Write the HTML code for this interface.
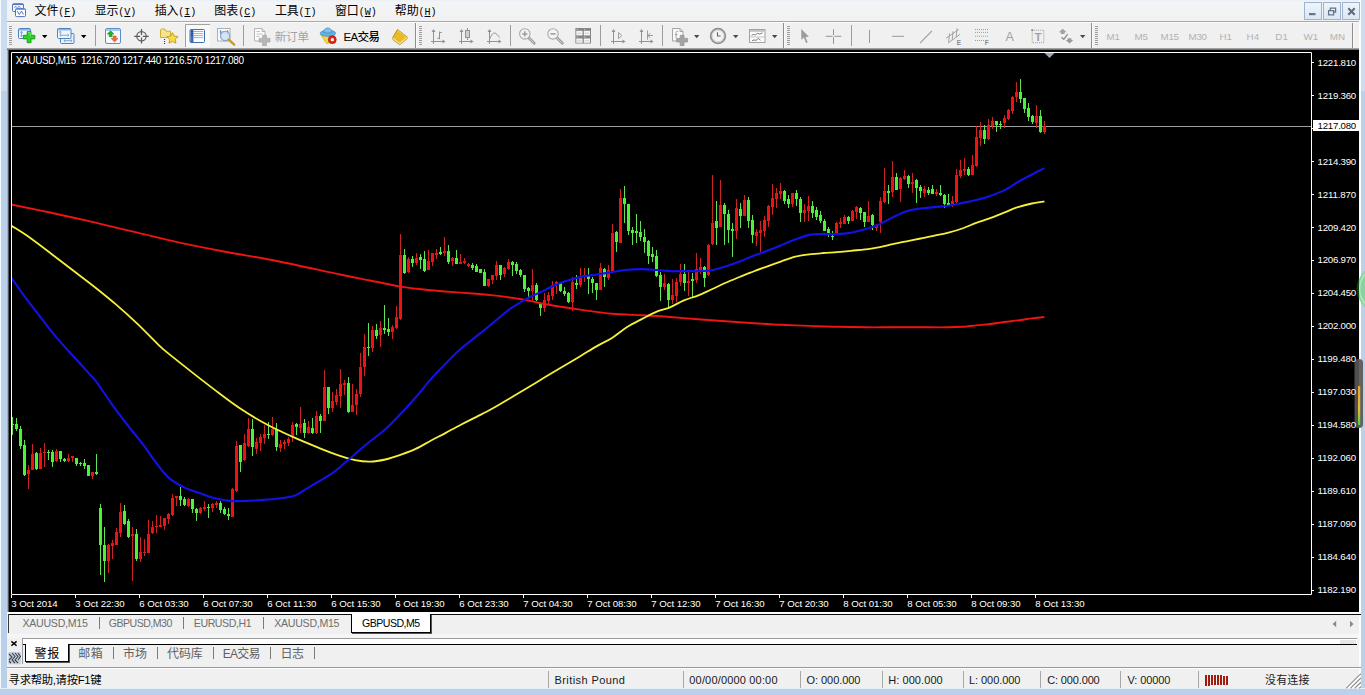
<!DOCTYPE html><html lang="zh-CN"><head><meta charset="utf-8"><title>MetaTrader 4 - XAUUSD,M15</title><style>
html,body{margin:0;padding:0}
body{width:1365px;height:695px;position:relative;overflow:hidden;background:#f0f0f0;font-family:'Liberation Sans', 'Noto Sans CJK SC', sans-serif;}
.a{position:absolute}
.t{position:absolute;white-space:nowrap;line-height:16px;height:16px}
.mn{font-family:'Liberation Mono', 'Noto Sans CJK SC', monospace;font-size:10px;letter-spacing:0}
svg{position:absolute;left:0;top:0}
</style></head><body>

<div class="a" style="left:0;top:0;width:1365px;height:22px;background:linear-gradient(#e9eff7 0,#f3f4f6 2px,#f1f1f1 100%)"></div>
<div class="a" style="left:0;top:0;width:7px;height:695px;background:#bad0ea"></div>
<div class="a" style="left:0;top:0;width:7px;height:91px;background:#cbdcf1"></div>
<div class="a" style="left:0;top:0;width:1px;height:695px;background:#f4fbff"></div>
<div class="a" style="left:7px;top:50px;width:1px;height:562px;background:#a4afbe"></div>
<div class="a" style="left:8px;top:50px;width:1px;height:562px;background:#55575c"></div>
<div class="a" style="left:1359px;top:0;width:2px;height:695px;background:#fbfeff"></div>
<div class="a" style="left:1361px;top:0;width:4px;height:695px;background:#b9d1ea"></div>
<div class="a" style="left:1361px;top:0;width:4px;height:91px;background:#cbdcf1"></div>
<div class="a" style="left:7px;top:21px;width:1352px;height:1px;background:#a9a9a9"></div>
<div class="a" style="left:7px;top:22px;width:1352px;height:1px;background:#fbfbfb"></div>
<div class="a" style="left:7px;top:23px;width:1352px;height:26px;background:#f0f0f0"></div>
<div class="a" style="left:7px;top:48px;width:1352px;height:2px;background:linear-gradient(#b8b8b8,#5a5a5a)"></div>
<div class="a" style="left:9px;top:50px;width:1350px;height:562px;background:#000"></div>
<div class="a" style="left:7px;top:612px;width:1352px;height:2px;background:#fdfdfd"></div>
<div class="a" style="left:7px;top:614px;width:1352px;height:20px;background:#f0f0f0"></div>
<div class="a" style="left:8px;top:614px;width:343px;height:1px;background:#0c0c0c"></div>
<div class="a" style="left:8px;top:614px;width:1px;height:19px;background:#3a3a3a"></div>
<div class="a" style="left:431px;top:614px;width:930px;height:1px;background:#0c0c0c"></div>
<div class="a" style="left:7px;top:634px;width:1352px;height:2px;background:#f6f6f6"></div>
<div class="a" style="left:7px;top:636px;width:1352px;height:31px;background:#f0f0f0"></div><div class="a" style="left:7px;top:636px;width:1352px;height:2px;background:#f5f5f5"></div>
<div class="a" style="left:22px;top:638px;width:1335px;height:6px;background:#fff;border-top:1px solid #9c9c9c;border-left:1px solid #9c9c9c;box-sizing:border-box"></div>
<div class="a" style="left:1340px;top:640px;width:16px;height:4px;background:#e6e6e6"></div>
<div class="a" style="left:68px;top:644px;width:1289px;height:1px;background:#000"></div><div class="a" style="left:23px;top:644px;width:3px;height:1px;background:#000"></div><div class="a" style="left:22px;top:639px;width:1px;height:25px;background:#9c9c9c"></div>
<div class="a" style="left:7px;top:667px;width:1354px;height:1px;background:#9a9a9a"></div>
<div class="a" style="left:7px;top:668px;width:1354px;height:1px;background:#fdfdfd"></div>
<div class="a" style="left:7px;top:669px;width:1352px;height:20px;background:#f0f0f0"></div><div class="a" style="left:0;top:688px;width:1365px;height:1px;background:#e6eef8"></div>




<div class="a" style="left:351px;top:614px;width:80px;height:19px;background:#fff;border:1px solid #000;border-top:none;box-sizing:border-box;box-shadow:1px 1px 0 #555"></div>
<div class="a" style="left:25px;top:644px;width:44px;height:18px;background:#fff;border:1px solid #000;border-top:none;box-sizing:border-box;box-shadow:1px 1px 0 #555"></div>

<div class="a" style="left:99px;top:617px;width:1px;height:12px;background:#7a7a7a"></div><div class="a" style="left:183px;top:617px;width:1px;height:12px;background:#7a7a7a"></div><div class="a" style="left:263px;top:617px;width:1px;height:12px;background:#7a7a7a"></div><div class="a" style="left:113px;top:647px;width:1px;height:12px;background:#7a7a7a"></div><div class="a" style="left:157px;top:647px;width:1px;height:12px;background:#7a7a7a"></div><div class="a" style="left:213px;top:647px;width:1px;height:12px;background:#7a7a7a"></div><div class="a" style="left:270px;top:647px;width:1px;height:12px;background:#7a7a7a"></div><div class="a" style="left:314px;top:647px;width:1px;height:12px;background:#7a7a7a"></div><div class="a" style="left:548px;top:671px;width:1px;height:17px;background:#a8a8a8"></div><div class="a" style="left:683px;top:671px;width:1px;height:17px;background:#a8a8a8"></div><div class="a" style="left:800px;top:671px;width:1px;height:17px;background:#a8a8a8"></div><div class="a" style="left:882px;top:671px;width:1px;height:17px;background:#a8a8a8"></div><div class="a" style="left:963px;top:671px;width:1px;height:17px;background:#a8a8a8"></div><div class="a" style="left:1040px;top:671px;width:1px;height:17px;background:#a8a8a8"></div><div class="a" style="left:1120px;top:671px;width:1px;height:17px;background:#a8a8a8"></div><div class="a" style="left:1198px;top:671px;width:1px;height:17px;background:#a8a8a8"></div>

<div class="a" style="left:1304px;top:2px;width:18px;height:18px;box-sizing:border-box;border:1px solid #9fb4cc;background:linear-gradient(#eef4fb,#dbe7f4)"></div>
<div class="a" style="left:1323px;top:2px;width:18px;height:18px;box-sizing:border-box;border:1px solid #9fb4cc;background:linear-gradient(#eef4fb,#dbe7f4)"></div>
<div class="a" style="left:1342px;top:2px;width:18px;height:18px;box-sizing:border-box;border:1px solid #9fb4cc;background:linear-gradient(#eef4fb,#dbe7f4)"></div>

<svg width="1365" height="695" viewBox="0 0 1365 695" shape-rendering="auto">
<rect x="11" y="126" width="1301" height="1" fill="#a0a0a0"/>
<defs><clipPath id="cc"><rect x="12" y="53" width="1299" height="541"/></clipPath></defs>
<g clip-path="url(#cc)">
<rect x="12" y="417" width="1" height="18" fill="#62e058"/><rect x="11" y="424" width="3" height="1" fill="#4af432"/>
<rect x="16" y="418" width="1" height="13" fill="#62e058"/><rect x="15" y="424" width="3" height="5" fill="#4af432"/>
<rect x="20" y="426" width="1" height="23" fill="#62e058"/><rect x="19" y="429" width="3" height="17" fill="#4af432"/>
<rect x="24" y="440" width="1" height="36" fill="#62e058"/><rect x="23" y="445" width="3" height="30" fill="#4af432"/>
<rect x="28" y="465" width="1" height="24" fill="#cc2424"/><rect x="27" y="470" width="3" height="4" fill="#ee1212"/>
<rect x="32" y="444" width="1" height="26" fill="#cc2424"/><rect x="31" y="454" width="3" height="16" fill="#ee1212"/>
<rect x="36" y="452" width="1" height="18" fill="#62e058"/><rect x="35" y="453" width="3" height="16" fill="#4af432"/>
<rect x="40" y="448" width="1" height="21" fill="#cc2424"/><rect x="39" y="453" width="3" height="16" fill="#ee1212"/>
<rect x="44" y="443" width="1" height="24" fill="#cc2424"/><rect x="43" y="452" width="3" height="1" fill="#ee1212"/>
<rect x="48" y="450" width="1" height="10" fill="#62e058"/><rect x="47" y="452" width="3" height="1" fill="#4af432"/>
<rect x="52" y="450" width="1" height="17" fill="#62e058"/><rect x="51" y="452" width="3" height="10" fill="#4af432"/>
<rect x="56" y="449" width="1" height="13" fill="#cc2424"/><rect x="55" y="451" width="3" height="10" fill="#ee1212"/>
<rect x="60" y="451" width="1" height="11" fill="#62e058"/><rect x="59" y="451" width="3" height="8" fill="#4af432"/>
<rect x="64" y="458" width="1" height="4" fill="#62e058"/><rect x="63" y="459" width="3" height="2" fill="#4af432"/>
<rect x="68" y="454" width="1" height="8" fill="#cc2424"/><rect x="67" y="458" width="3" height="3" fill="#ee1212"/>
<rect x="72" y="456" width="1" height="6" fill="#cc2424"/><rect x="71" y="456" width="3" height="2" fill="#ee1212"/>
<rect x="76" y="458" width="1" height="8" fill="#62e058"/><rect x="75" y="458" width="3" height="6" fill="#4af432"/>
<rect x="80" y="462" width="1" height="4" fill="#62e058"/><rect x="79" y="463" width="3" height="1" fill="#4af432"/>
<rect x="84" y="459" width="1" height="10" fill="#62e058"/><rect x="83" y="463" width="3" height="3" fill="#4af432"/>
<rect x="88" y="465" width="1" height="11" fill="#62e058"/><rect x="87" y="465" width="3" height="11" fill="#4af432"/>
<rect x="92" y="472" width="1" height="7" fill="#cc2424"/><rect x="91" y="472" width="3" height="4" fill="#ee1212"/>
<rect x="96" y="454" width="1" height="21" fill="#62e058"/><rect x="95" y="472" width="3" height="2" fill="#4af432"/>
<rect x="100" y="504" width="1" height="71" fill="#62e058"/><rect x="99" y="508" width="3" height="37" fill="#4af432"/>
<rect x="104" y="527" width="1" height="55" fill="#62e058"/><rect x="103" y="545" width="3" height="16" fill="#4af432"/>
<rect x="108" y="544" width="1" height="29" fill="#cc2424"/><rect x="107" y="545" width="3" height="16" fill="#ee1212"/>
<rect x="112" y="540" width="1" height="19" fill="#cc2424"/><rect x="111" y="543" width="3" height="3" fill="#ee1212"/>
<rect x="116" y="528" width="1" height="17" fill="#cc2424"/><rect x="115" y="532" width="3" height="13" fill="#ee1212"/>
<rect x="120" y="503" width="1" height="34" fill="#cc2424"/><rect x="119" y="512" width="3" height="21" fill="#ee1212"/>
<rect x="124" y="505" width="1" height="20" fill="#62e058"/><rect x="123" y="511" width="3" height="13" fill="#4af432"/>
<rect x="128" y="519" width="1" height="19" fill="#62e058"/><rect x="127" y="521" width="3" height="16" fill="#4af432"/>
<rect x="132" y="527" width="1" height="54" fill="#cc2424"/><rect x="131" y="534" width="3" height="2" fill="#ee1212"/>
<rect x="136" y="529" width="1" height="32" fill="#62e058"/><rect x="135" y="534" width="3" height="25" fill="#4af432"/>
<rect x="140" y="537" width="1" height="25" fill="#cc2424"/><rect x="139" y="552" width="3" height="7" fill="#ee1212"/>
<rect x="144" y="539" width="1" height="17" fill="#cc2424"/><rect x="143" y="552" width="3" height="1" fill="#ee1212"/>
<rect x="148" y="520" width="1" height="33" fill="#cc2424"/><rect x="147" y="534" width="3" height="19" fill="#ee1212"/>
<rect x="152" y="521" width="1" height="13" fill="#cc2424"/><rect x="151" y="527" width="3" height="6" fill="#ee1212"/>
<rect x="156" y="515" width="1" height="18" fill="#cc2424"/><rect x="155" y="526" width="3" height="1" fill="#ee1212"/>
<rect x="160" y="516" width="1" height="11" fill="#cc2424"/><rect x="159" y="525" width="3" height="2" fill="#ee1212"/>
<rect x="164" y="518" width="1" height="12" fill="#cc2424"/><rect x="163" y="518" width="3" height="8" fill="#ee1212"/>
<rect x="168" y="513" width="1" height="11" fill="#cc2424"/><rect x="167" y="514" width="3" height="5" fill="#ee1212"/>
<rect x="172" y="494" width="1" height="22" fill="#cc2424"/><rect x="171" y="498" width="3" height="17" fill="#ee1212"/>
<rect x="176" y="496" width="1" height="10" fill="#cc2424"/><rect x="175" y="496" width="3" height="2" fill="#ee1212"/>
<rect x="180" y="487" width="1" height="19" fill="#62e058"/><rect x="179" y="496" width="3" height="4" fill="#4af432"/>
<rect x="184" y="497" width="1" height="9" fill="#62e058"/><rect x="183" y="499" width="3" height="6" fill="#4af432"/>
<rect x="188" y="498" width="1" height="9" fill="#cc2424"/><rect x="187" y="499" width="3" height="7" fill="#ee1212"/>
<rect x="192" y="499" width="1" height="14" fill="#62e058"/><rect x="191" y="499" width="3" height="10" fill="#4af432"/>
<rect x="196" y="508" width="1" height="13" fill="#62e058"/><rect x="195" y="509" width="3" height="4" fill="#4af432"/>
<rect x="200" y="507" width="1" height="7" fill="#cc2424"/><rect x="199" y="508" width="3" height="5" fill="#ee1212"/>
<rect x="204" y="501" width="1" height="10" fill="#cc2424"/><rect x="203" y="507" width="3" height="2" fill="#ee1212"/>
<rect x="208" y="504" width="1" height="14" fill="#62e058"/><rect x="207" y="507" width="3" height="1" fill="#4af432"/>
<rect x="212" y="503" width="1" height="9" fill="#cc2424"/><rect x="211" y="504" width="3" height="4" fill="#ee1212"/>
<rect x="216" y="501" width="1" height="7" fill="#cc2424"/><rect x="215" y="503" width="3" height="2" fill="#ee1212"/>
<rect x="220" y="501" width="1" height="12" fill="#62e058"/><rect x="219" y="503" width="3" height="7" fill="#4af432"/>
<rect x="224" y="507" width="1" height="8" fill="#62e058"/><rect x="223" y="509" width="3" height="5" fill="#4af432"/>
<rect x="228" y="508" width="1" height="12" fill="#62e058"/><rect x="227" y="514" width="3" height="2" fill="#4af432"/>
<rect x="232" y="488" width="1" height="29" fill="#cc2424"/><rect x="231" y="489" width="3" height="28" fill="#ee1212"/>
<rect x="236" y="441" width="1" height="51" fill="#cc2424"/><rect x="235" y="446" width="3" height="45" fill="#ee1212"/>
<rect x="240" y="445" width="1" height="27" fill="#62e058"/><rect x="239" y="445" width="3" height="17" fill="#4af432"/>
<rect x="244" y="434" width="1" height="27" fill="#cc2424"/><rect x="243" y="443" width="3" height="17" fill="#ee1212"/>
<rect x="248" y="418" width="1" height="29" fill="#cc2424"/><rect x="247" y="429" width="3" height="17" fill="#ee1212"/>
<rect x="252" y="419" width="1" height="37" fill="#62e058"/><rect x="251" y="429" width="3" height="18" fill="#4af432"/>
<rect x="256" y="438" width="1" height="16" fill="#cc2424"/><rect x="255" y="442" width="3" height="7" fill="#ee1212"/>
<rect x="260" y="434" width="1" height="17" fill="#cc2424"/><rect x="259" y="437" width="3" height="6" fill="#ee1212"/>
<rect x="264" y="425" width="1" height="19" fill="#cc2424"/><rect x="263" y="434" width="3" height="4" fill="#ee1212"/>
<rect x="268" y="422" width="1" height="17" fill="#62e058"/><rect x="267" y="434" width="3" height="1" fill="#4af432"/>
<rect x="272" y="417" width="1" height="19" fill="#cc2424"/><rect x="271" y="429" width="3" height="6" fill="#ee1212"/>
<rect x="276" y="423" width="1" height="28" fill="#62e058"/><rect x="275" y="429" width="3" height="18" fill="#4af432"/>
<rect x="280" y="440" width="1" height="12" fill="#cc2424"/><rect x="279" y="444" width="3" height="4" fill="#ee1212"/>
<rect x="284" y="440" width="1" height="9" fill="#cc2424"/><rect x="283" y="442" width="3" height="2" fill="#ee1212"/>
<rect x="288" y="437" width="1" height="9" fill="#cc2424"/><rect x="287" y="439" width="3" height="4" fill="#ee1212"/>
<rect x="292" y="422" width="1" height="20" fill="#cc2424"/><rect x="291" y="425" width="3" height="11" fill="#ee1212"/>
<rect x="296" y="423" width="1" height="12" fill="#62e058"/><rect x="295" y="424" width="3" height="3" fill="#4af432"/>
<rect x="300" y="407" width="1" height="26" fill="#cc2424"/><rect x="299" y="424" width="3" height="4" fill="#ee1212"/>
<rect x="304" y="419" width="1" height="19" fill="#62e058"/><rect x="303" y="423" width="3" height="10" fill="#4af432"/>
<rect x="308" y="421" width="1" height="13" fill="#cc2424"/><rect x="307" y="427" width="3" height="6" fill="#ee1212"/>
<rect x="312" y="418" width="1" height="16" fill="#62e058"/><rect x="311" y="428" width="3" height="5" fill="#4af432"/>
<rect x="316" y="411" width="1" height="23" fill="#cc2424"/><rect x="315" y="416" width="3" height="17" fill="#ee1212"/>
<rect x="320" y="414" width="1" height="19" fill="#62e058"/><rect x="319" y="416" width="3" height="5" fill="#4af432"/>
<rect x="324" y="370" width="1" height="51" fill="#cc2424"/><rect x="323" y="387" width="3" height="34" fill="#ee1212"/>
<rect x="328" y="387" width="1" height="27" fill="#62e058"/><rect x="327" y="387" width="3" height="21" fill="#4af432"/>
<rect x="332" y="392" width="1" height="20" fill="#cc2424"/><rect x="331" y="401" width="3" height="7" fill="#ee1212"/>
<rect x="336" y="389" width="1" height="16" fill="#cc2424"/><rect x="335" y="395" width="3" height="7" fill="#ee1212"/>
<rect x="340" y="369" width="1" height="39" fill="#cc2424"/><rect x="339" y="384" width="3" height="12" fill="#ee1212"/>
<rect x="344" y="380" width="1" height="15" fill="#cc2424"/><rect x="343" y="383" width="3" height="2" fill="#ee1212"/>
<rect x="348" y="377" width="1" height="36" fill="#62e058"/><rect x="347" y="383" width="3" height="29" fill="#4af432"/>
<rect x="352" y="384" width="1" height="28" fill="#cc2424"/><rect x="351" y="405" width="3" height="7" fill="#ee1212"/>
<rect x="356" y="389" width="1" height="26" fill="#cc2424"/><rect x="355" y="394" width="3" height="11" fill="#ee1212"/>
<rect x="360" y="353" width="1" height="44" fill="#cc2424"/><rect x="359" y="367" width="3" height="27" fill="#ee1212"/>
<rect x="364" y="334" width="1" height="42" fill="#cc2424"/><rect x="363" y="347" width="3" height="20" fill="#ee1212"/>
<rect x="368" y="323" width="1" height="33" fill="#62e058"/><rect x="367" y="347" width="3" height="1" fill="#4af432"/>
<rect x="372" y="326" width="1" height="26" fill="#cc2424"/><rect x="371" y="330" width="3" height="18" fill="#ee1212"/>
<rect x="376" y="324" width="1" height="15" fill="#62e058"/><rect x="375" y="330" width="3" height="6" fill="#4af432"/>
<rect x="380" y="321" width="1" height="26" fill="#cc2424"/><rect x="379" y="328" width="3" height="7" fill="#ee1212"/>
<rect x="384" y="305" width="1" height="29" fill="#62e058"/><rect x="383" y="328" width="3" height="2" fill="#4af432"/>
<rect x="388" y="318" width="1" height="18" fill="#62e058"/><rect x="387" y="329" width="3" height="3" fill="#4af432"/>
<rect x="392" y="325" width="1" height="14" fill="#cc2424"/><rect x="391" y="327" width="3" height="5" fill="#ee1212"/>
<rect x="396" y="306" width="1" height="23" fill="#cc2424"/><rect x="395" y="317" width="3" height="11" fill="#ee1212"/>
<rect x="400" y="234" width="1" height="86" fill="#cc2424"/><rect x="399" y="255" width="3" height="64" fill="#ee1212"/>
<rect x="404" y="249" width="1" height="25" fill="#62e058"/><rect x="403" y="255" width="3" height="18" fill="#4af432"/>
<rect x="408" y="257" width="1" height="16" fill="#cc2424"/><rect x="407" y="259" width="3" height="13" fill="#ee1212"/>
<rect x="412" y="256" width="1" height="11" fill="#62e058"/><rect x="411" y="259" width="3" height="4" fill="#4af432"/>
<rect x="416" y="253" width="1" height="12" fill="#cc2424"/><rect x="415" y="258" width="3" height="5" fill="#ee1212"/>
<rect x="420" y="254" width="1" height="15" fill="#62e058"/><rect x="419" y="257" width="3" height="3" fill="#4af432"/>
<rect x="424" y="251" width="1" height="21" fill="#62e058"/><rect x="423" y="259" width="3" height="12" fill="#4af432"/>
<rect x="428" y="250" width="1" height="20" fill="#cc2424"/><rect x="427" y="261" width="3" height="9" fill="#ee1212"/>
<rect x="432" y="253" width="1" height="13" fill="#cc2424"/><rect x="431" y="253" width="3" height="9" fill="#ee1212"/>
<rect x="436" y="249" width="1" height="10" fill="#cc2424"/><rect x="435" y="253" width="3" height="2" fill="#ee1212"/>
<rect x="440" y="247" width="1" height="8" fill="#62e058"/><rect x="439" y="252" width="3" height="2" fill="#4af432"/>
<rect x="444" y="237" width="1" height="19" fill="#cc2424"/><rect x="443" y="251" width="3" height="2" fill="#ee1212"/>
<rect x="448" y="245" width="1" height="19" fill="#62e058"/><rect x="447" y="251" width="3" height="11" fill="#4af432"/>
<rect x="452" y="257" width="1" height="9" fill="#cc2424"/><rect x="451" y="258" width="3" height="3" fill="#ee1212"/>
<rect x="456" y="250" width="1" height="14" fill="#62e058"/><rect x="455" y="258" width="3" height="6" fill="#4af432"/>
<rect x="460" y="254" width="1" height="10" fill="#cc2424"/><rect x="459" y="262" width="3" height="2" fill="#ee1212"/>
<rect x="464" y="258" width="1" height="6" fill="#cc2424"/><rect x="463" y="261" width="3" height="2" fill="#ee1212"/>
<rect x="468" y="263" width="1" height="4" fill="#cc2424"/><rect x="467" y="264" width="3" height="2" fill="#ee1212"/>
<rect x="472" y="263" width="1" height="7" fill="#62e058"/><rect x="471" y="265" width="3" height="3" fill="#4af432"/>
<rect x="476" y="264" width="1" height="8" fill="#62e058"/><rect x="475" y="266" width="3" height="6" fill="#4af432"/>
<rect x="480" y="269" width="1" height="4" fill="#62e058"/><rect x="479" y="269" width="3" height="4" fill="#4af432"/>
<rect x="484" y="269" width="1" height="17" fill="#62e058"/><rect x="483" y="272" width="3" height="14" fill="#4af432"/>
<rect x="488" y="279" width="1" height="8" fill="#cc2424"/><rect x="487" y="279" width="3" height="7" fill="#ee1212"/>
<rect x="492" y="275" width="1" height="9" fill="#cc2424"/><rect x="491" y="275" width="3" height="5" fill="#ee1212"/>
<rect x="496" y="261" width="1" height="19" fill="#cc2424"/><rect x="495" y="265" width="3" height="11" fill="#ee1212"/>
<rect x="500" y="265" width="1" height="15" fill="#62e058"/><rect x="499" y="265" width="3" height="10" fill="#4af432"/>
<rect x="504" y="267" width="1" height="10" fill="#cc2424"/><rect x="503" y="268" width="3" height="6" fill="#ee1212"/>
<rect x="508" y="259" width="1" height="11" fill="#cc2424"/><rect x="507" y="262" width="3" height="7" fill="#ee1212"/>
<rect x="512" y="261" width="1" height="15" fill="#62e058"/><rect x="511" y="262" width="3" height="3" fill="#4af432"/>
<rect x="516" y="262" width="1" height="12" fill="#62e058"/><rect x="515" y="264" width="3" height="7" fill="#4af432"/>
<rect x="520" y="269" width="1" height="8" fill="#62e058"/><rect x="519" y="270" width="3" height="5" fill="#4af432"/>
<rect x="524" y="275" width="1" height="17" fill="#62e058"/><rect x="523" y="275" width="3" height="14" fill="#4af432"/>
<rect x="528" y="287" width="1" height="10" fill="#62e058"/><rect x="527" y="288" width="3" height="3" fill="#4af432"/>
<rect x="532" y="269" width="1" height="32" fill="#cc2424"/><rect x="531" y="285" width="3" height="6" fill="#ee1212"/>
<rect x="536" y="283" width="1" height="18" fill="#62e058"/><rect x="535" y="285" width="3" height="15" fill="#4af432"/>
<rect x="540" y="303" width="1" height="13" fill="#62e058"/><rect x="539" y="304" width="3" height="4" fill="#4af432"/>
<rect x="544" y="293" width="1" height="19" fill="#cc2424"/><rect x="543" y="300" width="3" height="8" fill="#ee1212"/>
<rect x="548" y="292" width="1" height="12" fill="#cc2424"/><rect x="547" y="295" width="3" height="6" fill="#ee1212"/>
<rect x="552" y="281" width="1" height="19" fill="#cc2424"/><rect x="551" y="285" width="3" height="11" fill="#ee1212"/>
<rect x="556" y="281" width="1" height="13" fill="#cc2424"/><rect x="555" y="282" width="3" height="2" fill="#ee1212"/>
<rect x="560" y="283" width="1" height="9" fill="#62e058"/><rect x="559" y="283" width="3" height="8" fill="#4af432"/>
<rect x="564" y="287" width="1" height="9" fill="#62e058"/><rect x="563" y="291" width="3" height="3" fill="#4af432"/>
<rect x="568" y="292" width="1" height="11" fill="#62e058"/><rect x="567" y="293" width="3" height="9" fill="#4af432"/>
<rect x="572" y="277" width="1" height="34" fill="#cc2424"/><rect x="571" y="282" width="3" height="20" fill="#ee1212"/>
<rect x="576" y="275" width="1" height="14" fill="#62e058"/><rect x="575" y="283" width="3" height="2" fill="#4af432"/>
<rect x="580" y="268" width="1" height="19" fill="#cc2424"/><rect x="579" y="276" width="3" height="9" fill="#ee1212"/>
<rect x="584" y="268" width="1" height="14" fill="#cc2424"/><rect x="583" y="275" width="3" height="1" fill="#ee1212"/>
<rect x="588" y="268" width="1" height="26" fill="#62e058"/><rect x="587" y="276" width="3" height="3" fill="#4af432"/>
<rect x="592" y="277" width="1" height="16" fill="#62e058"/><rect x="591" y="279" width="3" height="4" fill="#4af432"/>
<rect x="596" y="283" width="1" height="17" fill="#62e058"/><rect x="595" y="283" width="3" height="7" fill="#4af432"/>
<rect x="600" y="263" width="1" height="27" fill="#cc2424"/><rect x="599" y="268" width="3" height="22" fill="#ee1212"/>
<rect x="604" y="268" width="1" height="19" fill="#62e058"/><rect x="603" y="269" width="3" height="8" fill="#4af432"/>
<rect x="608" y="265" width="1" height="15" fill="#cc2424"/><rect x="607" y="270" width="3" height="8" fill="#ee1212"/>
<rect x="612" y="224" width="1" height="48" fill="#cc2424"/><rect x="611" y="233" width="3" height="38" fill="#ee1212"/>
<rect x="616" y="231" width="1" height="21" fill="#62e058"/><rect x="615" y="232" width="3" height="10" fill="#4af432"/>
<rect x="620" y="189" width="1" height="54" fill="#cc2424"/><rect x="619" y="198" width="3" height="45" fill="#ee1212"/>
<rect x="624" y="186" width="1" height="37" fill="#62e058"/><rect x="623" y="198" width="3" height="6" fill="#4af432"/>
<rect x="628" y="204" width="1" height="31" fill="#62e058"/><rect x="627" y="204" width="3" height="27" fill="#4af432"/>
<rect x="632" y="227" width="1" height="18" fill="#62e058"/><rect x="631" y="230" width="3" height="3" fill="#4af432"/>
<rect x="636" y="214" width="1" height="29" fill="#62e058"/><rect x="635" y="231" width="3" height="2" fill="#4af432"/>
<rect x="640" y="221" width="1" height="20" fill="#62e058"/><rect x="639" y="232" width="3" height="5" fill="#4af432"/>
<rect x="644" y="229" width="1" height="24" fill="#62e058"/><rect x="643" y="237" width="3" height="5" fill="#4af432"/>
<rect x="648" y="240" width="1" height="24" fill="#62e058"/><rect x="647" y="241" width="3" height="15" fill="#4af432"/>
<rect x="652" y="247" width="1" height="15" fill="#62e058"/><rect x="651" y="254" width="3" height="3" fill="#4af432"/>
<rect x="656" y="250" width="1" height="27" fill="#62e058"/><rect x="655" y="256" width="3" height="20" fill="#4af432"/>
<rect x="660" y="272" width="1" height="29" fill="#62e058"/><rect x="659" y="275" width="3" height="12" fill="#4af432"/>
<rect x="664" y="274" width="1" height="16" fill="#cc2424"/><rect x="663" y="283" width="3" height="4" fill="#ee1212"/>
<rect x="668" y="283" width="1" height="24" fill="#62e058"/><rect x="667" y="284" width="3" height="16" fill="#4af432"/>
<rect x="672" y="279" width="1" height="25" fill="#cc2424"/><rect x="671" y="295" width="3" height="5" fill="#ee1212"/>
<rect x="676" y="278" width="1" height="24" fill="#cc2424"/><rect x="675" y="282" width="3" height="14" fill="#ee1212"/>
<rect x="680" y="264" width="1" height="22" fill="#cc2424"/><rect x="679" y="274" width="3" height="8" fill="#ee1212"/>
<rect x="684" y="264" width="1" height="27" fill="#62e058"/><rect x="683" y="274" width="3" height="9" fill="#4af432"/>
<rect x="688" y="272" width="1" height="24" fill="#cc2424"/><rect x="687" y="281" width="3" height="2" fill="#ee1212"/>
<rect x="692" y="273" width="1" height="24" fill="#62e058"/><rect x="691" y="279" width="3" height="2" fill="#4af432"/>
<rect x="696" y="253" width="1" height="30" fill="#cc2424"/><rect x="695" y="269" width="3" height="11" fill="#ee1212"/>
<rect x="700" y="258" width="1" height="16" fill="#cc2424"/><rect x="699" y="267" width="3" height="3" fill="#ee1212"/>
<rect x="704" y="266" width="1" height="21" fill="#62e058"/><rect x="703" y="267" width="3" height="11" fill="#4af432"/>
<rect x="708" y="244" width="1" height="32" fill="#cc2424"/><rect x="707" y="245" width="3" height="30" fill="#ee1212"/>
<rect x="712" y="175" width="1" height="70" fill="#cc2424"/><rect x="711" y="223" width="3" height="21" fill="#ee1212"/>
<rect x="716" y="201" width="1" height="44" fill="#62e058"/><rect x="715" y="221" width="3" height="7" fill="#4af432"/>
<rect x="720" y="180" width="1" height="47" fill="#cc2424"/><rect x="719" y="205" width="3" height="22" fill="#ee1212"/>
<rect x="724" y="203" width="1" height="42" fill="#62e058"/><rect x="723" y="205" width="3" height="9" fill="#4af432"/>
<rect x="728" y="210" width="1" height="33" fill="#62e058"/><rect x="727" y="214" width="3" height="16" fill="#4af432"/>
<rect x="732" y="223" width="1" height="34" fill="#62e058"/><rect x="731" y="229" width="3" height="2" fill="#4af432"/>
<rect x="736" y="199" width="1" height="40" fill="#cc2424"/><rect x="735" y="208" width="3" height="23" fill="#ee1212"/>
<rect x="740" y="203" width="1" height="25" fill="#62e058"/><rect x="739" y="209" width="3" height="7" fill="#4af432"/>
<rect x="744" y="195" width="1" height="21" fill="#cc2424"/><rect x="743" y="200" width="3" height="16" fill="#ee1212"/>
<rect x="748" y="197" width="1" height="31" fill="#62e058"/><rect x="747" y="200" width="3" height="21" fill="#4af432"/>
<rect x="752" y="215" width="1" height="28" fill="#62e058"/><rect x="751" y="220" width="3" height="15" fill="#4af432"/>
<rect x="756" y="229" width="1" height="17" fill="#cc2424"/><rect x="755" y="232" width="3" height="4" fill="#ee1212"/>
<rect x="760" y="221" width="1" height="31" fill="#cc2424"/><rect x="759" y="230" width="3" height="3" fill="#ee1212"/>
<rect x="764" y="216" width="1" height="21" fill="#cc2424"/><rect x="763" y="220" width="3" height="11" fill="#ee1212"/>
<rect x="768" y="205" width="1" height="22" fill="#cc2424"/><rect x="767" y="206" width="3" height="15" fill="#ee1212"/>
<rect x="772" y="184" width="1" height="31" fill="#cc2424"/><rect x="771" y="198" width="3" height="9" fill="#ee1212"/>
<rect x="776" y="188" width="1" height="20" fill="#cc2424"/><rect x="775" y="193" width="3" height="6" fill="#ee1212"/>
<rect x="780" y="183" width="1" height="16" fill="#cc2424"/><rect x="779" y="191" width="3" height="3" fill="#ee1212"/>
<rect x="784" y="190" width="1" height="14" fill="#62e058"/><rect x="783" y="191" width="3" height="10" fill="#4af432"/>
<rect x="788" y="195" width="1" height="13" fill="#62e058"/><rect x="787" y="199" width="3" height="5" fill="#4af432"/>
<rect x="792" y="193" width="1" height="14" fill="#cc2424"/><rect x="791" y="193" width="3" height="11" fill="#ee1212"/>
<rect x="796" y="190" width="1" height="16" fill="#62e058"/><rect x="795" y="193" width="3" height="6" fill="#4af432"/>
<rect x="800" y="197" width="1" height="25" fill="#62e058"/><rect x="799" y="199" width="3" height="14" fill="#4af432"/>
<rect x="804" y="204" width="1" height="18" fill="#cc2424"/><rect x="803" y="210" width="3" height="3" fill="#ee1212"/>
<rect x="808" y="196" width="1" height="25" fill="#cc2424"/><rect x="807" y="206" width="3" height="5" fill="#ee1212"/>
<rect x="812" y="201" width="1" height="17" fill="#62e058"/><rect x="811" y="206" width="3" height="7" fill="#4af432"/>
<rect x="816" y="207" width="1" height="13" fill="#62e058"/><rect x="815" y="210" width="3" height="7" fill="#4af432"/>
<rect x="820" y="211" width="1" height="12" fill="#62e058"/><rect x="819" y="215" width="3" height="6" fill="#4af432"/>
<rect x="824" y="219" width="1" height="12" fill="#62e058"/><rect x="823" y="221" width="3" height="10" fill="#4af432"/>
<rect x="828" y="227" width="1" height="10" fill="#62e058"/><rect x="827" y="229" width="3" height="5" fill="#4af432"/>
<rect x="832" y="231" width="1" height="9" fill="#62e058"/><rect x="831" y="236" width="3" height="1" fill="#4af432"/>
<rect x="836" y="222" width="1" height="11" fill="#cc2424"/><rect x="835" y="223" width="3" height="10" fill="#ee1212"/>
<rect x="840" y="218" width="1" height="10" fill="#cc2424"/><rect x="839" y="222" width="3" height="2" fill="#ee1212"/>
<rect x="844" y="215" width="1" height="9" fill="#cc2424"/><rect x="843" y="217" width="3" height="7" fill="#ee1212"/>
<rect x="848" y="216" width="1" height="8" fill="#62e058"/><rect x="847" y="217" width="3" height="4" fill="#4af432"/>
<rect x="852" y="210" width="1" height="11" fill="#cc2424"/><rect x="851" y="211" width="3" height="10" fill="#ee1212"/>
<rect x="856" y="206" width="1" height="13" fill="#cc2424"/><rect x="855" y="207" width="3" height="5" fill="#ee1212"/>
<rect x="860" y="207" width="1" height="13" fill="#62e058"/><rect x="859" y="208" width="3" height="5" fill="#4af432"/>
<rect x="864" y="212" width="1" height="15" fill="#62e058"/><rect x="863" y="212" width="3" height="10" fill="#4af432"/>
<rect x="868" y="201" width="1" height="21" fill="#cc2424"/><rect x="867" y="216" width="3" height="6" fill="#ee1212"/>
<rect x="872" y="214" width="1" height="16" fill="#62e058"/><rect x="871" y="215" width="3" height="10" fill="#4af432"/>
<rect x="876" y="224" width="1" height="7" fill="#cc2424"/><rect x="875" y="226" width="3" height="2" fill="#ee1212"/>
<rect x="880" y="197" width="1" height="36" fill="#cc2424"/><rect x="879" y="201" width="3" height="21" fill="#ee1212"/>
<rect x="884" y="168" width="1" height="35" fill="#cc2424"/><rect x="883" y="191" width="3" height="11" fill="#ee1212"/>
<rect x="888" y="185" width="1" height="19" fill="#62e058"/><rect x="887" y="191" width="3" height="2" fill="#4af432"/>
<rect x="892" y="161" width="1" height="36" fill="#cc2424"/><rect x="891" y="177" width="3" height="15" fill="#ee1212"/>
<rect x="896" y="173" width="1" height="17" fill="#62e058"/><rect x="895" y="177" width="3" height="13" fill="#4af432"/>
<rect x="900" y="177" width="1" height="25" fill="#cc2424"/><rect x="899" y="178" width="3" height="11" fill="#ee1212"/>
<rect x="904" y="170" width="1" height="10" fill="#cc2424"/><rect x="903" y="176" width="3" height="3" fill="#ee1212"/>
<rect x="908" y="175" width="1" height="13" fill="#62e058"/><rect x="907" y="176" width="3" height="8" fill="#4af432"/>
<rect x="912" y="173" width="1" height="20" fill="#cc2424"/><rect x="911" y="182" width="3" height="2" fill="#ee1212"/>
<rect x="916" y="179" width="1" height="24" fill="#62e058"/><rect x="915" y="180" width="3" height="8" fill="#4af432"/>
<rect x="920" y="185" width="1" height="13" fill="#62e058"/><rect x="919" y="187" width="3" height="4" fill="#4af432"/>
<rect x="924" y="186" width="1" height="11" fill="#cc2424"/><rect x="923" y="189" width="3" height="4" fill="#ee1212"/>
<rect x="928" y="187" width="1" height="8" fill="#62e058"/><rect x="927" y="190" width="3" height="3" fill="#4af432"/>
<rect x="932" y="185" width="1" height="9" fill="#62e058"/><rect x="931" y="189" width="3" height="5" fill="#4af432"/>
<rect x="936" y="189" width="1" height="7" fill="#cc2424"/><rect x="935" y="192" width="3" height="2" fill="#ee1212"/>
<rect x="940" y="185" width="1" height="11" fill="#62e058"/><rect x="939" y="193" width="3" height="2" fill="#4af432"/>
<rect x="944" y="194" width="1" height="14" fill="#62e058"/><rect x="943" y="195" width="3" height="9" fill="#4af432"/>
<rect x="948" y="194" width="1" height="11" fill="#62e058"/><rect x="947" y="203" width="3" height="2" fill="#4af432"/>
<rect x="952" y="196" width="1" height="11" fill="#cc2424"/><rect x="951" y="201" width="3" height="4" fill="#ee1212"/>
<rect x="956" y="169" width="1" height="34" fill="#cc2424"/><rect x="955" y="175" width="3" height="27" fill="#ee1212"/>
<rect x="960" y="160" width="1" height="18" fill="#cc2424"/><rect x="959" y="170" width="3" height="6" fill="#ee1212"/>
<rect x="964" y="158" width="1" height="17" fill="#cc2424"/><rect x="963" y="169" width="3" height="2" fill="#ee1212"/>
<rect x="968" y="167" width="1" height="9" fill="#62e058"/><rect x="967" y="169" width="3" height="6" fill="#4af432"/>
<rect x="972" y="155" width="1" height="20" fill="#cc2424"/><rect x="971" y="165" width="3" height="10" fill="#ee1212"/>
<rect x="976" y="126" width="1" height="41" fill="#cc2424"/><rect x="975" y="137" width="3" height="29" fill="#ee1212"/>
<rect x="980" y="122" width="1" height="24" fill="#cc2424"/><rect x="979" y="130" width="3" height="8" fill="#ee1212"/>
<rect x="984" y="125" width="1" height="19" fill="#62e058"/><rect x="983" y="130" width="3" height="9" fill="#4af432"/>
<rect x="988" y="119" width="1" height="21" fill="#cc2424"/><rect x="987" y="125" width="3" height="14" fill="#ee1212"/>
<rect x="992" y="117" width="1" height="12" fill="#cc2424"/><rect x="991" y="121" width="3" height="5" fill="#ee1212"/>
<rect x="996" y="121" width="1" height="11" fill="#62e058"/><rect x="995" y="121" width="3" height="4" fill="#4af432"/>
<rect x="1000" y="121" width="1" height="8" fill="#62e058"/><rect x="999" y="124" width="3" height="1" fill="#4af432"/>
<rect x="1004" y="115" width="1" height="13" fill="#cc2424"/><rect x="1003" y="118" width="3" height="5" fill="#ee1212"/>
<rect x="1008" y="109" width="1" height="11" fill="#cc2424"/><rect x="1007" y="110" width="3" height="9" fill="#ee1212"/>
<rect x="1012" y="96" width="1" height="18" fill="#cc2424"/><rect x="1011" y="97" width="3" height="14" fill="#ee1212"/>
<rect x="1016" y="82" width="1" height="20" fill="#cc2424"/><rect x="1015" y="92" width="3" height="5" fill="#ee1212"/>
<rect x="1020" y="79" width="1" height="24" fill="#62e058"/><rect x="1019" y="92" width="3" height="7" fill="#4af432"/>
<rect x="1024" y="98" width="1" height="15" fill="#62e058"/><rect x="1023" y="98" width="3" height="11" fill="#4af432"/>
<rect x="1028" y="103" width="1" height="18" fill="#62e058"/><rect x="1027" y="108" width="3" height="9" fill="#4af432"/>
<rect x="1032" y="115" width="1" height="9" fill="#62e058"/><rect x="1031" y="116" width="3" height="6" fill="#4af432"/>
<rect x="1036" y="105" width="1" height="23" fill="#cc2424"/><rect x="1035" y="116" width="3" height="7" fill="#ee1212"/>
<rect x="1040" y="110" width="1" height="23" fill="#62e058"/><rect x="1039" y="116" width="3" height="16" fill="#4af432"/>
<rect x="1044" y="121" width="1" height="13" fill="#cc2424"/><rect x="1043" y="126" width="3" height="6" fill="#ee1212"/>
<path d="M11.0 204.4C11.2 204.4 5.6 203.3 12.3 204.7C19.0 206.1 37.5 209.8 51.2 212.7C64.9 215.6 79.9 219.1 94.3 222.4C108.7 225.7 123.1 229.3 137.5 232.7C151.9 236.1 166.3 239.8 180.7 242.9C195.1 246.0 207.6 248.4 223.8 251.5C240.0 254.6 258.6 257.4 278.0 261.2C297.4 265.0 324.6 271.3 340.0 274.5C355.4 277.7 360.1 278.5 370.2 280.5C380.3 282.5 390.3 285.0 400.4 286.6C410.5 288.2 420.6 289.2 430.7 290.2C440.8 291.2 450.8 291.8 460.9 292.6C471.0 293.4 481.0 294.0 491.1 295.1C501.2 296.2 511.2 297.6 521.3 299.3C531.4 301.0 541.4 303.5 551.5 305.3C561.6 307.1 571.7 308.5 581.8 309.9C591.9 311.3 601.9 312.9 612.0 313.8C622.1 314.7 632.5 314.8 642.2 315.3C651.9 315.8 660.7 316.3 670.0 317.0C679.3 317.7 688.5 318.6 697.8 319.3C707.1 320.0 716.4 320.6 725.7 321.2C735.0 321.8 744.2 322.6 753.5 323.2C762.8 323.8 772.1 324.4 781.4 324.8C790.7 325.2 799.9 325.6 809.2 325.9C818.5 326.2 827.7 326.6 837.0 326.8C846.3 327.0 855.6 327.2 864.9 327.3C874.2 327.4 883.4 327.3 892.7 327.3C902.0 327.3 911.3 327.3 920.6 327.3C929.9 327.3 941.5 327.4 948.4 327.3C955.3 327.2 957.7 327.1 962.3 326.8C966.9 326.5 971.6 325.9 976.2 325.4C980.9 324.9 985.6 324.6 990.2 324.0C994.9 323.4 999.5 322.6 1004.1 322.0C1008.7 321.4 1013.4 321.0 1018.0 320.4C1022.6 319.8 1027.5 319.0 1031.9 318.4C1036.3 317.8 1042.3 317.2 1044.4 317.0" fill="none" stroke="#ee1414" stroke-width="1.9" stroke-linejoin="round"/><path d="M11.0 225.4C11.2 225.6 9.2 224.3 12.3 226.3C15.4 228.3 23.1 232.9 29.6 237.5C36.1 242.1 44.0 248.2 51.2 253.7C58.4 259.2 65.6 264.8 72.8 270.3C80.0 275.8 87.1 281.0 94.3 286.7C101.5 292.4 108.7 298.2 115.9 304.4C123.1 310.6 131.4 318.1 137.5 323.8C143.6 329.6 148.3 334.6 152.6 338.9C156.9 343.2 157.3 344.2 163.4 349.4C169.5 354.6 180.7 363.3 189.3 370.1C197.9 376.9 206.5 383.6 215.1 390.1C223.7 396.6 232.4 403.3 241.0 409.0C249.6 414.7 258.3 419.9 266.9 424.5C275.5 429.1 284.2 433.0 292.8 436.9C301.4 440.8 310.8 444.6 318.7 447.8C326.6 451.0 333.9 453.8 340.0 455.8C346.1 457.9 350.1 459.1 355.1 460.1C360.1 461.1 365.2 461.7 370.2 461.6C375.2 461.5 380.3 460.6 385.3 459.5C390.3 458.4 395.3 456.7 400.4 454.9C405.4 453.1 410.6 451.3 415.6 448.9C420.7 446.5 425.7 443.4 430.7 440.7C435.7 438.0 440.8 435.6 445.8 432.9C450.8 430.2 455.9 427.3 460.9 424.7C465.9 422.1 471.0 419.7 476.0 417.1C481.0 414.5 486.1 412.1 491.1 409.3C496.1 406.5 501.2 403.5 506.2 400.5C511.2 397.5 516.3 394.5 521.3 391.5C526.3 388.5 531.4 385.4 536.4 382.4C541.4 379.4 546.5 376.3 551.5 373.3C556.5 370.3 561.7 367.3 566.7 364.3C571.8 361.3 576.8 358.2 581.8 355.2C586.8 352.2 591.9 349.0 596.9 346.1C601.9 343.2 607.0 341.2 612.0 338.0C617.0 334.8 622.1 330.3 627.1 327.1C632.1 323.9 637.2 321.5 642.2 318.9C647.2 316.3 652.7 313.3 657.3 311.4C661.9 309.5 665.6 309.1 670.0 307.3C674.4 305.5 679.3 302.2 683.9 300.3C688.5 298.4 693.1 297.4 697.8 295.6C702.4 293.8 707.1 291.4 711.8 289.3C716.4 287.2 721.1 284.9 725.7 282.8C730.3 280.8 735.0 278.9 739.6 277.0C744.2 275.1 748.9 273.3 753.5 271.5C758.1 269.7 762.8 268.0 767.4 266.3C772.0 264.6 776.8 262.9 781.4 261.3C786.0 259.7 790.7 257.8 795.3 256.6C799.9 255.5 804.6 255.0 809.2 254.4C813.8 253.8 818.5 253.4 823.1 253.0C827.7 252.6 832.4 252.6 837.0 252.2C841.6 251.8 846.4 251.3 851.0 250.8C855.6 250.3 860.3 250.0 864.9 249.4C869.5 248.8 874.2 248.3 878.8 247.4C883.4 246.5 888.1 245.1 892.7 244.1C897.3 243.1 902.0 242.2 906.6 241.3C911.2 240.4 916.0 239.4 920.6 238.5C925.2 237.6 929.9 236.7 934.5 235.7C939.1 234.7 943.8 233.9 948.4 232.7C953.0 231.5 957.7 230.1 962.3 228.5C966.9 226.9 971.6 224.6 976.2 222.9C980.9 221.2 985.6 219.9 990.2 218.2C994.9 216.5 999.5 214.4 1004.1 212.6C1008.7 210.8 1013.4 208.6 1018.0 207.1C1022.6 205.6 1027.5 204.4 1031.9 203.5C1036.3 202.6 1042.3 201.8 1044.4 201.5" fill="none" stroke="#f6f03a" stroke-width="1.8" stroke-linejoin="round"/><path d="M11.0 277.2C11.3 277.6 10.6 276.6 12.7 279.6C14.8 282.6 19.3 289.2 23.8 295.3C28.3 301.4 34.3 309.1 39.6 316.0C44.9 322.9 50.2 330.1 55.5 336.4C60.8 342.7 66.0 348.2 71.3 354.0C76.6 359.8 83.0 366.8 87.1 371.4C91.2 375.9 91.9 375.9 96.0 381.3C100.1 386.7 106.4 396.6 111.6 403.8C116.8 411.0 121.9 417.8 127.1 424.5C132.3 431.2 137.8 437.6 142.6 443.9C147.3 450.1 151.3 456.4 155.6 462.0C159.9 467.6 163.8 473.4 168.5 477.6C173.2 481.8 178.9 484.8 184.1 487.4C189.3 490.0 194.4 491.3 199.6 493.1C204.8 494.9 209.9 497.0 215.1 498.3C220.3 499.6 225.5 500.5 230.7 500.9C235.9 501.3 240.2 501.1 246.2 500.9C252.2 500.7 259.1 500.4 266.9 499.6C274.7 498.8 286.3 497.9 292.8 496.2C299.3 494.5 301.5 491.6 305.8 489.2C310.1 486.8 314.4 484.1 318.7 481.5C323.0 478.9 328.1 476.1 331.7 473.7C335.2 471.3 336.1 470.5 340.0 467.2C343.9 463.9 350.1 458.3 355.1 454.0C360.1 449.7 365.2 445.4 370.2 441.3C375.2 437.2 380.3 433.7 385.3 429.2C390.3 424.7 395.3 419.4 400.4 414.1C405.4 408.8 410.6 403.3 415.6 397.5C420.7 391.7 425.7 385.1 430.7 379.4C435.7 373.7 440.9 368.5 445.8 363.5C450.7 358.5 455.9 353.2 460.0 349.5C464.1 345.8 466.8 344.1 470.1 341.4C473.5 338.7 476.8 336.1 480.1 333.4C483.5 330.7 486.8 328.1 490.2 325.3C493.6 322.5 496.9 319.6 500.3 316.8C503.7 314.0 507.0 311.1 510.4 308.7C513.8 306.3 517.0 304.4 520.4 302.4C523.8 300.4 527.1 298.5 530.5 296.8C533.9 295.1 537.2 293.7 540.6 292.1C544.0 290.5 547.4 288.7 550.6 287.2C553.8 285.7 557.3 284.1 560.0 283.0C562.7 281.9 563.1 281.9 566.7 280.8C570.3 279.7 576.8 277.7 581.8 276.6C586.8 275.6 591.9 275.2 596.9 274.5C601.9 273.8 607.0 272.9 612.0 272.1C617.0 271.3 622.1 270.2 627.1 269.7C632.1 269.2 637.2 269.1 642.2 269.1C647.2 269.2 652.7 269.7 657.3 270.0C661.9 270.3 665.6 270.9 670.0 271.1C674.4 271.3 679.3 271.1 683.9 271.1C688.5 271.1 693.1 271.2 697.8 271.1C702.4 271.0 707.1 271.1 711.8 270.3C716.4 269.5 721.1 267.9 725.7 266.4C730.3 264.9 735.0 263.2 739.6 261.4C744.2 259.6 748.9 257.6 753.5 255.8C758.1 254.0 762.8 252.6 767.4 250.8C772.0 249.0 776.8 247.1 781.4 245.2C786.0 243.3 790.7 241.3 795.3 239.6C799.9 237.9 804.6 235.8 809.2 234.9C813.8 234.0 818.5 234.2 823.1 234.1C827.7 234.0 832.4 234.3 837.0 234.1C841.6 233.9 846.4 233.5 851.0 232.7C855.6 231.9 860.3 230.7 864.9 229.3C869.5 228.0 874.2 226.6 878.8 224.6C883.4 222.6 888.1 219.6 892.7 217.4C897.3 215.2 902.0 212.7 906.6 211.2C911.2 209.7 916.0 209.2 920.6 208.5C925.2 207.8 929.9 207.6 934.5 207.1C939.1 206.6 943.8 206.4 948.4 205.7C953.0 205.0 957.7 203.8 962.3 202.9C966.9 202.0 971.6 201.3 976.2 200.1C980.9 198.9 985.6 197.5 990.2 195.9C994.9 194.3 999.5 192.7 1004.1 190.4C1008.7 188.1 1013.4 184.7 1018.0 182.0C1022.6 179.3 1027.5 176.8 1031.9 174.5C1036.3 172.2 1042.3 169.2 1044.4 168.1" fill="none" stroke="#1212e6" stroke-width="2.1" stroke-linejoin="round"/>
</g>
<path d="M11.500 52.500H1311.500V594.500H11.500z" fill="none" stroke="#fff" stroke-width="1"/>
<rect x="11" y="595" width="1" height="3" fill="#fff"/><rect x="75" y="595" width="1" height="3" fill="#fff"/><rect x="139" y="595" width="1" height="3" fill="#fff"/><rect x="203" y="595" width="1" height="3" fill="#fff"/><rect x="267" y="595" width="1" height="3" fill="#fff"/><rect x="331" y="595" width="1" height="3" fill="#fff"/><rect x="395" y="595" width="1" height="3" fill="#fff"/><rect x="459" y="595" width="1" height="3" fill="#fff"/><rect x="523" y="595" width="1" height="3" fill="#fff"/><rect x="587" y="595" width="1" height="3" fill="#fff"/><rect x="651" y="595" width="1" height="3" fill="#fff"/><rect x="715" y="595" width="1" height="3" fill="#fff"/><rect x="779" y="595" width="1" height="3" fill="#fff"/><rect x="843" y="595" width="1" height="3" fill="#fff"/><rect x="907" y="595" width="1" height="3" fill="#fff"/><rect x="971" y="595" width="1" height="3" fill="#fff"/><rect x="1035" y="595" width="1" height="3" fill="#fff"/>
<rect x="1312" y="62" width="2" height="1" fill="#fff"/><rect x="1312" y="95" width="2" height="1" fill="#fff"/><rect x="1312" y="128" width="2" height="1" fill="#fff"/><rect x="1312" y="161" width="2" height="1" fill="#fff"/><rect x="1312" y="194" width="2" height="1" fill="#fff"/><rect x="1312" y="227" width="2" height="1" fill="#fff"/><rect x="1312" y="260" width="2" height="1" fill="#fff"/><rect x="1312" y="293" width="2" height="1" fill="#fff"/><rect x="1312" y="326" width="2" height="1" fill="#fff"/><rect x="1312" y="359" width="2" height="1" fill="#fff"/><rect x="1312" y="392" width="2" height="1" fill="#fff"/><rect x="1312" y="425" width="2" height="1" fill="#fff"/><rect x="1312" y="458" width="2" height="1" fill="#fff"/><rect x="1312" y="491" width="2" height="1" fill="#fff"/><rect x="1312" y="524" width="2" height="1" fill="#fff"/><rect x="1312" y="557" width="2" height="1" fill="#fff"/><rect x="1312" y="590" width="2" height="1" fill="#fff"/>
<rect x="1313" y="120" width="46" height="11" fill="#fff"/>
<path d="M1044.500 53h10l-5 5z" fill="#9aa5b0"/>
<defs><clipPath id="cl"><rect x="1350" y="260" width="9" height="60"/></clipPath><clipPath id="cr"><rect x="1359" y="260" width="6" height="60"/></clipPath></defs>
<circle cx="1382" cy="289" r="25.500" fill="#0c4212" clip-path="url(#cl)"/>
<circle cx="1382" cy="289" r="25" fill="#8ad2a2" clip-path="url(#cr)"/>
<circle cx="1382" cy="289" r="22.400" fill="none" stroke="#aeeebd" stroke-width="1.400" clip-path="url(#cr)"/>
<rect x="1354.500" y="359" width="8.500" height="69" rx="4" fill="#565656" fill-opacity=".92"/>
<defs><linearGradient id="og" x1="0" y1="0" x2="0" y2="1"><stop offset="0" stop-color="#f0a020"/><stop offset=".6" stop-color="#e0c030"/><stop offset="1" stop-color="#50d040"/></linearGradient></defs>
<rect x="1358" y="386" width="2.200" height="39" fill="url(#og)"/>
<g>
<rect x="12.500" y="3.700" width="11" height="7.800" rx="1" fill="#f3f7fd" stroke="#5273c0"/>
<rect x="13" y="4" width="10" height="1" fill="#5273c0"/>
<path d="M14.500 7.700l1.200-1.500 1.300 1.500M17.800 7.700l1.200-1.500 1.300 1.500" stroke="#5273c0" fill="none" stroke-width=".9"/>
<rect x="15.500" y="8.600" width="10" height="8" rx="1" fill="#fbfdff" stroke="#5273c0"/>
<rect x="16" y="9" width="9" height=".8" fill="#6f8fd0"/>
<path d="M17.300 11.300l2 3.200 2.200-3.300 2.100 3.300" stroke="#5273c0" fill="none" stroke-width="1"/>
</g>
<rect x="1309" y="13" width="6.500" height="2.200" fill="#66758a"/>
<path d="M1330.300 10V8.200h5.300v3.800h-1.500M1328.600 10.600h5v4.200h-5z" fill="none" stroke="#66758a" stroke-width="1.300"/>
<path d="M1348.300 8.300l6.400 6.400M1354.700 8.300l-6.400 6.400" stroke="#5c6a7e" stroke-width="2"/>
<path d="M11.400 641.400l5.200 4.400M16.600 641.400l-5.200 4.400" stroke="#000" stroke-width="1.500"/>
<rect x="8.400" y="652" width="12.400" height="12.300" fill="#c6cfda"/>
<path d="M9 654l3 3-3 3M12 653l3 3.500-3 3.500 3 3M15 653l3 3.500-3 3.500 3 3M18 653l2.500 3.500-2.500 3.500M9 661l2 2" stroke="#39414d" stroke-width="1.100" fill="none"/>
<path d="M1336.200 620.800l-3.600 3.200 3.600 3.200zM1350 620.800l3.600 3.200-3.600 3.200z" fill="#8a8a8a"/>
<rect x="1205" y="675" width="2" height="11" fill="#a31a10"/><rect x="1208" y="675" width="2" height="11" fill="#a31a10"/><rect x="1211" y="675" width="2" height="10" fill="#a31a10"/><rect x="1214" y="675" width="2" height="10" fill="#a31a10"/><rect x="1217" y="675" width="2" height="10" fill="#a31a10"/><rect x="1220" y="675" width="2" height="10" fill="#a31a10"/><rect x="1223" y="676" width="2" height="9" fill="#a31a10"/><rect x="1226" y="676" width="2" height="9" fill="#a31a10"/>
<defs><clipPath id="gc"><rect x="1340" y="670" width="21" height="18.500"/></clipPath></defs>
<g clip-path="url(#gc)"><path d="M1346.2 688.500l14.8 -14.8" stroke="#8a8a8a" stroke-width="1.300"/><path d="M1347.8 688.500l13.2 -13.2" stroke="#fff" stroke-width="1.300"/><path d="M1350.5 688.500l10.5 -10.5" stroke="#8a8a8a" stroke-width="1.300"/><path d="M1352.1 688.500l8.9 -8.9" stroke="#fff" stroke-width="1.300"/><path d="M1354.8 688.500l6.2 -6.2" stroke="#8a8a8a" stroke-width="1.300"/><path d="M1356.4 688.500l4.6 -4.6" stroke="#fff" stroke-width="1.300"/><path d="M1359.1 688.500l1.9 -1.9" stroke="#8a8a8a" stroke-width="1.300"/><path d="M1360.7 688.500l0.3 -0.3" stroke="#fff" stroke-width="1.300"/></g>
<rect x="9" y="26" width="3" height="1" fill="#9e9e9e"/><rect x="9" y="28" width="3" height="1" fill="#9e9e9e"/><rect x="9" y="30" width="3" height="1" fill="#9e9e9e"/><rect x="9" y="32" width="3" height="1" fill="#9e9e9e"/><rect x="9" y="34" width="3" height="1" fill="#9e9e9e"/><rect x="9" y="36" width="3" height="1" fill="#9e9e9e"/><rect x="9" y="38" width="3" height="1" fill="#9e9e9e"/><rect x="9" y="40" width="3" height="1" fill="#9e9e9e"/><rect x="9" y="42" width="3" height="1" fill="#9e9e9e"/><rect x="9" y="44" width="3" height="1" fill="#9e9e9e"/>
<rect x="18.500" y="28.500" width="12" height="10" rx="1" fill="#eef4fb" stroke="#4d83c4"/>
<rect x="19" y="29" width="11" height="1.600" fill="#8db5e2"/>
<path d="M21.500 31.500v5M20.300 32.800l1.200-1.400 1.200 1.400M20.300 35.300l1.200 1.400 1.200-1.400" stroke="#6f93bf" stroke-width=".8" fill="none"/>
<path d="M27.200 31.600h3.800v3.700h3.800v3.600h-3.800v3.800h-3.800v-3.800h-3.800v-3.600h3.800z" fill="#30d030" stroke="#119a11" stroke-width=".9"/>
<path d="M28 32.400h2.200v3.700" stroke="#8ff08f" stroke-width=".8" fill="none"/>
<path d="M42 35h5.4l-2.700 3.200z" fill="#000"/>
<rect x="60.500" y="33.500" width="13.500" height="10" rx="1" fill="#e9f1fa" stroke="#4d83c4"/>
<path d="M64 40.700h8M65.200 39.500l-1.300 1.200 1.300 1.200M70.800 39.500l1.300 1.200-1.300 1.200" stroke="#6f93bf" stroke-width=".8" fill="none"/>
<rect x="57.500" y="28.500" width="13.500" height="10" rx="1" fill="#f3f7fc" stroke="#4d83c4"/>
<rect x="58" y="29" width="12.500" height="1.500" fill="#8db5e2"/>
<path d="M60.300 31.300v5.500M59.200 32.500l1.100-1.300 1.100 1.300M60.300 35.200h8.500M67.600 34l1.300 1.200-1.300 1.200" stroke="#6f93bf" stroke-width=".8" fill="none"/>
<path d="M81 35h5.4l-2.700 3.200z" fill="#000"/>
<rect x="95" y="25" width="1" height="21" fill="#9c9c9c"/>
<rect x="105.500" y="28.500" width="15" height="15" rx="1.500" fill="#f6f9fd" stroke="#5b8fc9"/>
<rect x="106" y="29" width="14" height="2" fill="#a9c8ec"/>
<path d="M110.600 30.800l3.400 3.300h-1.900v2.600h-3v-2.600h-1.900z" fill="#27b027" stroke="#0f8a0f" stroke-width=".5"/>
<path d="M114.600 41.900l-3.400-3.300h1.900v-2.600h3v2.600h1.900z" fill="#f0702a" stroke="#c8491a" stroke-width=".5"/>
<circle cx="141.500" cy="36.300" r="4.700" fill="none" stroke="#5c5c5c" stroke-width="1.200"/>
<path d="M141.500 29v6M141.500 37.600v6M134.200 36.300h6M142.800 36.300h6" stroke="#5c5c5c" stroke-width="1.200"/>
<path d="M160.500 30v7.500h10v-6.300h-4.500l-1.200-2.200h-3.300z" fill="#f7e48a" stroke="#cfae3c"/>
<path d="M164.600 39v5" stroke="#222" stroke-dasharray="1 1"/>
<path d="M172.500 32.600l1.750 3.500 3.850.55-2.800 2.700.65 3.850-3.450-1.800-3.450 1.800.65-3.850-2.800-2.700 3.850-.55z" fill="#f6dc48" stroke="#c29a1a" stroke-width=".9"/>
<rect x="185" y="24" width="25" height="23" fill="#f9f9f9"/><path d="M185.500 47V24.500H210" stroke="#a2a2a2" fill="none"/>
<rect x="190" y="29.500" width="14.500" height="13" rx="1" fill="#fff" stroke="#3f6fae"/>
<rect x="190.500" y="30" width="3" height="12" fill="#3c6cb4"/>
<path d="M195.800 31.500h7.500M195.800 33.600h7.500M195.800 35.600h7.500M195.800 37.600h7.500" stroke="#7f9fd0" stroke-width=".8"/>
<path d="M194.300 31.500h1.200M194.300 33.600h1.200M194.300 35.600h1.200M194.300 37.600h1.200" stroke="#d03030" stroke-width=".9"/>
<path d="M191.500 31.500h1M191.500 33.600h1M191.500 35.600h1" stroke="#111" stroke-width=".9"/>
<rect x="217.500" y="28.500" width="12.500" height="12.500" fill="#fbfbfb" stroke="#a8b0ba"/>
<path d="M220.500 30v8M219.500 32h5M227.500 30v5M225.500 31.500h3" stroke="#6f8fb8" stroke-width=".9" fill="none"/>
<circle cx="225.200" cy="36" r="4.600" fill="#c9def4" fill-opacity=".8" stroke="#8ba6c9" stroke-width="1.200"/>
<path d="M228.800 39.700l5.400 5" stroke="#c49a28" stroke-width="2.300" stroke-linecap="round"/>
<rect x="243" y="25" width="1" height="21" fill="#9c9c9c"/>
<path d="M254.500 28.500h7.500l3 3v9.500h-10.500z" fill="#fbfbfb" stroke="#b4b4b4"/>
<path d="M262 28.500v3h3" fill="none" stroke="#b4b4b4"/>
<path d="M256.500 31.500h3.500M256.500 34h6M256.500 36.500h3" stroke="#c2c2c2"/>
<path d="M262.700 35.300h3.700v3.100h3.600v3.600h-3.600v3.600h-3.700v-3.600h-3.600v-3.600h3.600z" fill="#b7b7b7" stroke="#a2a2a2" stroke-width=".7"/>
<path d="M320.800 34.500l5.200 8.300c.8 .9 2.200 .9 3 0l5.500-8.300z" fill="#f7d548" stroke="#d3a722" stroke-width=".8"/>
<path d="M320.300 33.500c0-2.300 3-3 7.600-3s7.600 .7 7.600 3c0 1.700-3.200 2.700-7.600 2.700s-7.600-1-7.600-2.700z" fill="#62b3e4" stroke="#3b8fc6" stroke-width=".8"/>
<path d="M323.800 32.300c0-2.600 1.600-4.300 4-4.300s3.900 1.700 3.900 4.300c-1.200 .9-6.600 .9-7.900 0z" fill="#7cc4ee" stroke="#3b8fc6" stroke-width=".8"/>
<circle cx="332.300" cy="39.700" r="3.900" fill="#d92b1b" stroke="#a81a0e" stroke-width=".8"/>
<rect x="330.900" y="38.300" width="2.800" height="2.800" fill="#fff"/>
<path d="M397.500 29.500l10.100 7.900-7.900 6.400-7.400-5.500z" fill="#e9ba24" stroke="#b2861a" stroke-width=".9"/>
<path d="M392.600 38.200l7.100 5.400 7.700-6.200" fill="none" stroke="#f7df88" stroke-width="1.600"/>
<path d="M392.300 38.300l7.400 5.500 7.900-6.400" fill="none" stroke="#b2861a" stroke-width=".7" transform="translate(0,1)"/>
<path d="M397.700 30.500l8.300 6.600" stroke="#f5d460" stroke-width="1"/>
<rect x="415" y="23" width="1" height="25" fill="#8e8e8e"/><rect x="416" y="23" width="1" height="25" fill="#fafafa"/>
<rect x="419" y="26" width="3" height="1" fill="#9e9e9e"/><rect x="419" y="28" width="3" height="1" fill="#9e9e9e"/><rect x="419" y="30" width="3" height="1" fill="#9e9e9e"/><rect x="419" y="32" width="3" height="1" fill="#9e9e9e"/><rect x="419" y="34" width="3" height="1" fill="#9e9e9e"/><rect x="419" y="36" width="3" height="1" fill="#9e9e9e"/><rect x="419" y="38" width="3" height="1" fill="#9e9e9e"/><rect x="419" y="40" width="3" height="1" fill="#9e9e9e"/><rect x="419" y="42" width="3" height="1" fill="#9e9e9e"/><rect x="419" y="44" width="3" height="1" fill="#9e9e9e"/>
<path d="M433.5 30.500V44M431 41.500H444" stroke="#929292" fill="none"/><path d="M433.5 29l-2 3h4zM445.5 41.500l-3-2v4z" fill="#929292"/><path d="M439.500 31.500v7.700M437.300 38.300h2.200M439.500 32.500h2.300" stroke="#929292" fill="none"/>
<path d="M461.5 30.500V44M459 41.500H472" stroke="#929292" fill="none"/><path d="M461.5 29l-2 3h4zM473.5 41.500l-3-2v4z" fill="#929292"/><path d="M467.500 28v12" stroke="#929292"/><rect x="465.500" y="30.500" width="4" height="7" fill="#cfcfcf" stroke="#929292"/>
<path d="M489.5 30.500V44M487 41.500H500" stroke="#929292" fill="none"/><path d="M489.5 29l-2 3h4zM501.5 41.500l-3-2v4z" fill="#929292"/><path d="M489.500 39.200c1.500-3.500 3.200-6.200 5-6.200s2.800 2.400 5.300 4.400" stroke="#929292" fill="none"/>
<rect x="510" y="25" width="1" height="21" fill="#9c9c9c"/>
<path d="M528.4 37.600l5.800 5.700" stroke="#9a9a9a" stroke-width="2.800" stroke-linecap="round"/>
<path d="M528.8 38l5.200 5.100" stroke="#d8d8d8" stroke-width="1" stroke-linecap="round"/>
<circle cx="524.8" cy="33.900" r="5.200" fill="#f3f3f3" stroke="#a9a9a9" stroke-width="1.100"/>
<path d="M522.1999999999999 33.900h5.200M524.8 31.300v5.200" stroke="#9b9b9b" stroke-width="1.500"/>
<path d="M556.6 37.600l5.800 5.700" stroke="#9a9a9a" stroke-width="2.800" stroke-linecap="round"/>
<path d="M557.0 38l5.200 5.100" stroke="#d8d8d8" stroke-width="1" stroke-linecap="round"/>
<circle cx="553.0" cy="33.900" r="5.200" fill="#f3f3f3" stroke="#a9a9a9" stroke-width="1.100"/>
<path d="M550.4 33.900h5.200" stroke="#9b9b9b" stroke-width="1.500"/>
<rect x="575.400" y="28" width="15.600" height="15.500" fill="#858585"/>
<rect x="576.300" y="30.800" width="6.200" height="4.600" fill="#f5f5f5"/><rect x="583.800" y="30.800" width="6.200" height="4.600" fill="#f5f5f5"/>
<rect x="576.300" y="38.500" width="6.200" height="4.300" fill="#f5f5f5"/><rect x="583.800" y="38.500" width="6.200" height="4.300" fill="#f5f5f5"/>
<path d="M577.300 33.200h4.200M584.800 33.200h4.200M577.300 40.800h4.200M584.800 40.800h4.200" stroke="#c4c4c4" stroke-width=".8"/>
<path d="M576.800 29.400h.9M584.300 29.400h.9M576.800 37.100h.9M584.300 37.100h.9" stroke="#eee" stroke-width=".9"/>
<rect x="600" y="25" width="1" height="21" fill="#9c9c9c"/>
<path d="M613.5 30.500V44M611 41.500H624" stroke="#929292" fill="none"/><path d="M613.5 29l-2 3h4zM625.5 41.500l-3-2v4z" fill="#929292"/><path d="M618.500 32.500v6.200l3.400-3.100z" fill="none" stroke="#929292" stroke-width=".9"/>
<path d="M641.5 30.500V44M639 41.500H652" stroke="#929292" fill="none"/><path d="M641.5 29l-2 3h4zM653.5 41.500l-3-2v4z" fill="#929292"/><path d="M647.500 30.500v9.200M653 35.500h-5M650.300 33.200l-2.500 2.300 2.500 2.300" stroke="#929292" fill="none" stroke-width=".9"/>
<rect x="662" y="25" width="1" height="21" fill="#9c9c9c"/>
<path d="M672.500 28.500h7.500l3 3v9.500h-10.500z" fill="#fafafa" stroke="#a4a4a4"/>
<path d="M680 28.500v3h3" fill="none" stroke="#a4a4a4"/>
<path d="M678.300 31.400c-1.800-.5-2.300 .3-2.300 1.800v5M674.800 34.600h2.800" stroke="#9a9a9a" fill="none" stroke-width=".9"/>
<path d="M680.200 35.300h3.800v3.100h3.600v3.600h-3.600v3.600h-3.800v-3.600h-3.500v-3.600h3.500z" fill="#a4a4a4" stroke="#8f8f8f" stroke-width=".7"/>
<path d="M694 35h5.4l-2.700 3.200z" fill="#4a4a4a"/>
<circle cx="718" cy="36" r="7.300" fill="#f4f4f4" stroke="#919191" stroke-width="1.800"/>
<circle cx="718" cy="36" r="5.600" fill="none" stroke="#d2d2d2" stroke-width=".8"/>
<path d="M717.500 32.300v3.700h3.200" stroke="#666" fill="none" stroke-width="1.100"/>
<path d="M733 35h5.4l-2.700 3.200z" fill="#4a4a4a"/>
<rect x="749.500" y="29.500" width="15.500" height="13" fill="#fbfbfb" stroke="#a2a2a2"/>
<rect x="750" y="30" width="14.500" height="1.800" fill="#c0c0c0"/>
<path d="M750 37h14.500" stroke="#b5b5b5" stroke-width=".8"/>
<path d="M751.500 35.300l2-.8 2 .3 2-1.500 2.200 .8 2.800-1.200M752 40.800l2-.9 2 .5 2.300-2 2.200 1.800" stroke="#6e6e6e" fill="none" stroke-width=".9"/>
<path d="M772 35h5.4l-2.700 3.200z" fill="#4a4a4a"/>
<rect x="783" y="23" width="1" height="25" fill="#8e8e8e"/><rect x="784" y="23" width="1" height="25" fill="#fafafa"/>
<rect x="787" y="26" width="3" height="1" fill="#9e9e9e"/><rect x="787" y="28" width="3" height="1" fill="#9e9e9e"/><rect x="787" y="30" width="3" height="1" fill="#9e9e9e"/><rect x="787" y="32" width="3" height="1" fill="#9e9e9e"/><rect x="787" y="34" width="3" height="1" fill="#9e9e9e"/><rect x="787" y="36" width="3" height="1" fill="#9e9e9e"/><rect x="787" y="38" width="3" height="1" fill="#9e9e9e"/><rect x="787" y="40" width="3" height="1" fill="#9e9e9e"/><rect x="787" y="42" width="3" height="1" fill="#9e9e9e"/><rect x="787" y="44" width="3" height="1" fill="#9e9e9e"/>
<path d="M801.300 29v10.800l2.600-2.300 2.200 5.600 1.600-.7-2.200-5.300 3.400-.3z" fill="#9c9c9c"/>
<path d="M833.500 29.300v6M833.500 37.300v6.500M825.700 36.300h7M834.500 36.300h6.800" stroke="#949494" stroke-width="1" fill="none"/>
<rect x="851" y="25" width="1" height="21" fill="#9c9c9c"/>
<path d="M869.500 30v13" stroke="#9a9a9a"/>
<path d="M892 36.300h12" stroke="#9a9a9a"/>
<path d="M920 43.100l11.900-12.300" stroke="#9a9a9a" stroke-width="1.100"/>
<path d="M946 38.300l12.700-8.800M948.200 43.100l11.800-8.800M949.500 33.500l-.8 8.500M953 31.200l-.8 8.500M957 28.500l-.8 8.500" stroke="#9a9a9a" stroke-width=".9" fill="none"/>
<text x="956.700" y="44.700" font-size="6.400" font-weight="bold" fill="#8a8a8a" font-family="'Liberation Sans', sans-serif">E</text>
<path d="M975 29.500h13.500M975 32.400h13.500M975 36.200h13.500M975 40.500h9" stroke="#9a9a9a" stroke-dasharray="1 1"/>
<text x="984.800" y="44.700" font-size="6.400" font-weight="bold" fill="#8a8a8a" font-family="'Liberation Sans', sans-serif">F</text>
<rect x="1032.200" y="30.200" width="11.600" height="12.500" fill="none" stroke="#9a9a9a" stroke-dasharray="1 1"/>
<rect x="1031.200" y="29.300" width="2" height="1.600" fill="#8e8e8e"/>
<path d="M1062.700 28.800l3.800 3.500h-1.900v1.700h-3.800v-1.700h-1.900z" fill="#a2a2a2"/>
<path d="M1061.500 37.200l2.300 2 3.900-5" stroke="#8e8e8e" fill="none" stroke-width="1.300"/>
<path d="M1069.500 43.500l-3.800-3.500h1.900v-1.700h3.800v1.700h1.900z" fill="#9a9a9a"/>
<path d="M1080 35h5.4l-2.700 3.200z" fill="#4a4a4a"/>
<rect x="1091" y="23" width="1" height="25" fill="#8e8e8e"/><rect x="1092" y="23" width="1" height="25" fill="#fafafa"/>
<rect x="1095" y="26" width="3" height="1" fill="#9e9e9e"/><rect x="1095" y="28" width="3" height="1" fill="#9e9e9e"/><rect x="1095" y="30" width="3" height="1" fill="#9e9e9e"/><rect x="1095" y="32" width="3" height="1" fill="#9e9e9e"/><rect x="1095" y="34" width="3" height="1" fill="#9e9e9e"/><rect x="1095" y="36" width="3" height="1" fill="#9e9e9e"/><rect x="1095" y="38" width="3" height="1" fill="#9e9e9e"/><rect x="1095" y="40" width="3" height="1" fill="#9e9e9e"/><rect x="1095" y="42" width="3" height="1" fill="#9e9e9e"/><rect x="1095" y="44" width="3" height="1" fill="#9e9e9e"/>
<rect x="1352" y="23" width="1" height="25" fill="#8e8e8e"/><rect x="1353" y="23" width="1" height="25" fill="#fafafa"/>
<text x="1009.700" y="40.900" font-size="12.600" text-anchor="middle" fill="#a0a0a0" font-family="'Liberation Sans', 'Noto Sans CJK SC', sans-serif">A</text>
<text x="1038" y="40.900" font-size="11" font-weight="bold" text-anchor="middle" fill="#a0a0a0" font-family="'Liberation Sans', 'Noto Sans CJK SC', sans-serif">T</text>
</svg>
<span class="t" id="t0" style="left:34.5px;top:3.1px;font-size:12px;color:#000;font-family:'Liberation Sans', 'Noto Sans CJK SC', sans-serif;letter-spacing:-0.113px;">文件<span class="mn">(<u>F</u>)</span></span>
<span class="t" id="t1" style="left:94.7px;top:3.1px;font-size:12px;color:#000;font-family:'Liberation Sans', 'Noto Sans CJK SC', sans-serif;letter-spacing:-0.193px;">显示<span class="mn">(<u>V</u>)</span></span>
<span class="t" id="t2" style="left:154.7px;top:3.1px;font-size:12px;color:#000;font-family:'Liberation Sans', 'Noto Sans CJK SC', sans-serif;letter-spacing:-0.192px;">插入<span class="mn">(<u>I</u>)</span></span>
<span class="t" id="t3" style="left:214.2px;top:3.1px;font-size:12px;color:#000;font-family:'Liberation Sans', 'Noto Sans CJK SC', sans-serif;letter-spacing:0.008px;">图表<span class="mn">(<u>C</u>)</span></span>
<span class="t" id="t4" style="left:274.9px;top:3.1px;font-size:12px;color:#000;font-family:'Liberation Sans', 'Noto Sans CJK SC', sans-serif;letter-spacing:-0.172px;">工具<span class="mn">(<u>T</u>)</span></span>
<span class="t" id="t5" style="left:335.0px;top:3.1px;font-size:12px;color:#000;font-family:'Liberation Sans', 'Noto Sans CJK SC', sans-serif;letter-spacing:-0.153px;">窗口<span class="mn">(<u>W</u>)</span></span>
<span class="t" id="t6" style="left:394.8px;top:3.1px;font-size:12px;color:#000;font-family:'Liberation Sans', 'Noto Sans CJK SC', sans-serif;letter-spacing:-0.133px;">帮助<span class="mn">(<u>H</u>)</span></span>
<span class="t" id="t7" style="left:274.8px;top:28.6px;font-size:11.6px;color:#a3a3a3;font-family:'Liberation Sans', 'Noto Sans CJK SC', sans-serif;letter-spacing:-0.266px;">新订单</span>
<span class="t" id="t8" style="left:343.5px;top:28.6px;font-size:11.6px;color:#000;font-family:'Liberation Sans', 'Noto Sans CJK SC', sans-serif;letter-spacing:-0.764px;font-weight:500;">EA交易</span>
<span class="t" id="t9" style="left:1106.5px;top:28.5px;font-size:9.8px;color:#b2b2b2;font-family:'Liberation Sans', 'Noto Sans CJK SC', sans-serif;letter-spacing:-0.162px;">M1</span>
<span class="t" id="t10" style="left:1134.5px;top:28.5px;font-size:9.8px;color:#b2b2b2;font-family:'Liberation Sans', 'Noto Sans CJK SC', sans-serif;letter-spacing:-0.162px;">M5</span>
<span class="t" id="t11" style="left:1160.5px;top:28.5px;font-size:9.8px;color:#b2b2b2;font-family:'Liberation Sans', 'Noto Sans CJK SC', sans-serif;letter-spacing:-0.254px;">M15</span>
<span class="t" id="t12" style="left:1188.6px;top:28.5px;font-size:9.8px;color:#b2b2b2;font-family:'Liberation Sans', 'Noto Sans CJK SC', sans-serif;letter-spacing:-0.354px;">M30</span>
<span class="t" id="t13" style="left:1219.4px;top:28.5px;font-size:9.8px;color:#b2b2b2;font-family:'Liberation Sans', 'Noto Sans CJK SC', sans-serif;letter-spacing:0.084px;">H1</span>
<span class="t" id="t14" style="left:1246.5px;top:28.5px;font-size:9.8px;color:#b2b2b2;font-family:'Liberation Sans', 'Noto Sans CJK SC', sans-serif;letter-spacing:0.284px;">H4</span>
<span class="t" id="t15" style="left:1275.3px;top:28.5px;font-size:9.8px;color:#b2b2b2;font-family:'Liberation Sans', 'Noto Sans CJK SC', sans-serif;letter-spacing:0.084px;">D1</span>
<span class="t" id="t16" style="left:1303.6px;top:28.5px;font-size:9.8px;color:#b2b2b2;font-family:'Liberation Sans', 'Noto Sans CJK SC', sans-serif;letter-spacing:-0.052px;">W1</span>
<span class="t" id="t17" style="left:1329.7px;top:28.5px;font-size:9.8px;color:#b2b2b2;font-family:'Liberation Sans', 'Noto Sans CJK SC', sans-serif;letter-spacing:0.075px;">MN</span>
<span class="t" id="t18" style="left:15.7px;top:52.6px;font-size:10.0px;color:#fff;font-family:'Liberation Sans', 'Noto Sans CJK SC', sans-serif;letter-spacing:-0.356px;white-space:pre;">XAUUSD,M15  1216.720 1217.440 1216.570 1217.080</span>
<span class="t" id="t19" style="left:1317.6px;top:54.8px;font-size:9.7px;color:#fff;font-family:'Liberation Sans', 'Noto Sans CJK SC', sans-serif;letter-spacing:-0.251px;">1221.810</span>
<span class="t" id="t20" style="left:1317.6px;top:87.7px;font-size:9.7px;color:#fff;font-family:'Liberation Sans', 'Noto Sans CJK SC', sans-serif;letter-spacing:-0.251px;">1219.360</span>
<span class="t" id="t21" style="left:1317.6px;top:118.0px;font-size:9.7px;color:#000;font-family:'Liberation Sans', 'Noto Sans CJK SC', sans-serif;letter-spacing:-0.251px;">1217.080</span>
<span class="t" id="t22" style="left:1317.6px;top:153.6px;font-size:9.7px;color:#fff;font-family:'Liberation Sans', 'Noto Sans CJK SC', sans-serif;letter-spacing:-0.251px;">1214.390</span>
<span class="t" id="t23" style="left:1317.6px;top:186.6px;font-size:9.7px;color:#fff;font-family:'Liberation Sans', 'Noto Sans CJK SC', sans-serif;letter-spacing:-0.161px;">1211.870</span>
<span class="t" id="t24" style="left:1317.6px;top:219.5px;font-size:9.7px;color:#fff;font-family:'Liberation Sans', 'Noto Sans CJK SC', sans-serif;letter-spacing:-0.251px;">1209.420</span>
<span class="t" id="t25" style="left:1317.6px;top:252.4px;font-size:9.7px;color:#fff;font-family:'Liberation Sans', 'Noto Sans CJK SC', sans-serif;letter-spacing:-0.251px;">1206.970</span>
<span class="t" id="t26" style="left:1317.6px;top:285.4px;font-size:9.7px;color:#fff;font-family:'Liberation Sans', 'Noto Sans CJK SC', sans-serif;letter-spacing:-0.251px;">1204.450</span>
<span class="t" id="t27" style="left:1317.6px;top:318.3px;font-size:9.7px;color:#fff;font-family:'Liberation Sans', 'Noto Sans CJK SC', sans-serif;letter-spacing:-0.251px;">1202.000</span>
<span class="t" id="t28" style="left:1317.6px;top:351.3px;font-size:9.7px;color:#fff;font-family:'Liberation Sans', 'Noto Sans CJK SC', sans-serif;letter-spacing:-0.161px;">1199.480</span>
<span class="t" id="t29" style="left:1317.6px;top:384.2px;font-size:9.7px;color:#fff;font-family:'Liberation Sans', 'Noto Sans CJK SC', sans-serif;letter-spacing:-0.161px;">1197.030</span>
<span class="t" id="t30" style="left:1317.6px;top:417.1px;font-size:9.7px;color:#fff;font-family:'Liberation Sans', 'Noto Sans CJK SC', sans-serif;letter-spacing:-0.161px;">1194.580</span>
<span class="t" id="t31" style="left:1317.6px;top:450.1px;font-size:9.7px;color:#fff;font-family:'Liberation Sans', 'Noto Sans CJK SC', sans-serif;letter-spacing:-0.161px;">1192.060</span>
<span class="t" id="t32" style="left:1317.6px;top:483.0px;font-size:9.7px;color:#fff;font-family:'Liberation Sans', 'Noto Sans CJK SC', sans-serif;letter-spacing:-0.161px;">1189.610</span>
<span class="t" id="t33" style="left:1317.6px;top:516.0px;font-size:9.7px;color:#fff;font-family:'Liberation Sans', 'Noto Sans CJK SC', sans-serif;letter-spacing:-0.161px;">1187.090</span>
<span class="t" id="t34" style="left:1317.6px;top:548.9px;font-size:9.7px;color:#fff;font-family:'Liberation Sans', 'Noto Sans CJK SC', sans-serif;letter-spacing:-0.161px;">1184.640</span>
<span class="t" id="t35" style="left:1317.6px;top:581.8px;font-size:9.7px;color:#fff;font-family:'Liberation Sans', 'Noto Sans CJK SC', sans-serif;letter-spacing:-0.161px;">1182.190</span>
<span class="t" id="t36" style="left:11.3px;top:595.5px;font-size:9.7px;color:#fff;font-family:'Liberation Sans', 'Noto Sans CJK SC', sans-serif;letter-spacing:-0.121px;">3 Oct 2014</span>
<span class="t" id="t37" style="left:75.3px;top:595.5px;font-size:9.7px;color:#fff;font-family:'Liberation Sans', 'Noto Sans CJK SC', sans-serif;letter-spacing:-0.081px;">3 Oct 22:30</span>
<span class="t" id="t38" style="left:139.3px;top:595.5px;font-size:9.7px;color:#fff;font-family:'Liberation Sans', 'Noto Sans CJK SC', sans-serif;letter-spacing:-0.081px;">6 Oct 03:30</span>
<span class="t" id="t39" style="left:203.3px;top:595.5px;font-size:9.7px;color:#fff;font-family:'Liberation Sans', 'Noto Sans CJK SC', sans-serif;letter-spacing:-0.081px;">6 Oct 07:30</span>
<span class="t" id="t40" style="left:267.3px;top:595.5px;font-size:9.7px;color:#fff;font-family:'Liberation Sans', 'Noto Sans CJK SC', sans-serif;letter-spacing:-0.016px;">6 Oct 11:30</span>
<span class="t" id="t41" style="left:331.3px;top:595.5px;font-size:9.7px;color:#fff;font-family:'Liberation Sans', 'Noto Sans CJK SC', sans-serif;letter-spacing:-0.081px;">6 Oct 15:30</span>
<span class="t" id="t42" style="left:395.3px;top:595.5px;font-size:9.7px;color:#fff;font-family:'Liberation Sans', 'Noto Sans CJK SC', sans-serif;letter-spacing:-0.081px;">6 Oct 19:30</span>
<span class="t" id="t43" style="left:459.3px;top:595.5px;font-size:9.7px;color:#fff;font-family:'Liberation Sans', 'Noto Sans CJK SC', sans-serif;letter-spacing:-0.081px;">6 Oct 23:30</span>
<span class="t" id="t44" style="left:523.3px;top:595.5px;font-size:9.7px;color:#fff;font-family:'Liberation Sans', 'Noto Sans CJK SC', sans-serif;letter-spacing:-0.081px;">7 Oct 04:30</span>
<span class="t" id="t45" style="left:587.3px;top:595.5px;font-size:9.7px;color:#fff;font-family:'Liberation Sans', 'Noto Sans CJK SC', sans-serif;letter-spacing:-0.081px;">7 Oct 08:30</span>
<span class="t" id="t46" style="left:651.3px;top:595.5px;font-size:9.7px;color:#fff;font-family:'Liberation Sans', 'Noto Sans CJK SC', sans-serif;letter-spacing:-0.081px;">7 Oct 12:30</span>
<span class="t" id="t47" style="left:715.3px;top:595.5px;font-size:9.7px;color:#fff;font-family:'Liberation Sans', 'Noto Sans CJK SC', sans-serif;letter-spacing:-0.081px;">7 Oct 16:30</span>
<span class="t" id="t48" style="left:779.3px;top:595.5px;font-size:9.7px;color:#fff;font-family:'Liberation Sans', 'Noto Sans CJK SC', sans-serif;letter-spacing:-0.081px;">7 Oct 20:30</span>
<span class="t" id="t49" style="left:843.3px;top:595.5px;font-size:9.7px;color:#fff;font-family:'Liberation Sans', 'Noto Sans CJK SC', sans-serif;letter-spacing:-0.081px;">8 Oct 01:30</span>
<span class="t" id="t50" style="left:907.3px;top:595.5px;font-size:9.7px;color:#fff;font-family:'Liberation Sans', 'Noto Sans CJK SC', sans-serif;letter-spacing:-0.081px;">8 Oct 05:30</span>
<span class="t" id="t51" style="left:971.3px;top:595.5px;font-size:9.7px;color:#fff;font-family:'Liberation Sans', 'Noto Sans CJK SC', sans-serif;letter-spacing:-0.081px;">8 Oct 09:30</span>
<span class="t" id="t52" style="left:1035.3px;top:595.5px;font-size:9.7px;color:#fff;font-family:'Liberation Sans', 'Noto Sans CJK SC', sans-serif;letter-spacing:-0.081px;">8 Oct 13:30</span>
<span class="t" id="t53" style="left:22.4px;top:615.2px;font-size:10.6px;color:#6e6e6e;font-family:'Liberation Sans', 'Noto Sans CJK SC', sans-serif;letter-spacing:-0.250px;">XAUUSD,M15</span>
<span class="t" id="t54" style="left:108.7px;top:615.2px;font-size:10.6px;color:#6e6e6e;font-family:'Liberation Sans', 'Noto Sans CJK SC', sans-serif;letter-spacing:-0.520px;">GBPUSD,M30</span>
<span class="t" id="t55" style="left:193.8px;top:615.2px;font-size:10.6px;color:#6e6e6e;font-family:'Liberation Sans', 'Noto Sans CJK SC', sans-serif;letter-spacing:-0.437px;">EURUSD,H1</span>
<span class="t" id="t56" style="left:274.3px;top:615.2px;font-size:10.6px;color:#6e6e6e;font-family:'Liberation Sans', 'Noto Sans CJK SC', sans-serif;letter-spacing:-0.280px;">XAUUSD,M15</span>
<span class="t" id="t57" style="left:362.0px;top:615.2px;font-size:10.6px;color:#000;font-family:'Liberation Sans', 'Noto Sans CJK SC', sans-serif;letter-spacing:-0.534px;">GBPUSD,M5</span>
<span class="t" id="t58" style="left:34.5px;top:646.3px;font-size:12px;color:#000;font-family:'Liberation Sans', 'Noto Sans CJK SC', sans-serif;letter-spacing:0.642px;">警报</span>
<span class="t" id="t59" style="left:78.3px;top:646.3px;font-size:12px;color:#606060;font-family:'Liberation Sans', 'Noto Sans CJK SC', sans-serif;letter-spacing:0.442px;">邮箱</span>
<span class="t" id="t60" style="left:123.0px;top:646.3px;font-size:12px;color:#606060;font-family:'Liberation Sans', 'Noto Sans CJK SC', sans-serif;letter-spacing:0.042px;">市场</span>
<span class="t" id="t61" style="left:167.1px;top:646.3px;font-size:12px;color:#606060;font-family:'Liberation Sans', 'Noto Sans CJK SC', sans-serif;letter-spacing:-0.139px;">代码库</span>
<span class="t" id="t62" style="left:222.7px;top:646.3px;font-size:12px;color:#606060;font-family:'Liberation Sans', 'Noto Sans CJK SC', sans-serif;letter-spacing:-0.729px;">EA交易</span>
<span class="t" id="t63" style="left:280.5px;top:646.3px;font-size:12px;color:#606060;font-family:'Liberation Sans', 'Noto Sans CJK SC', sans-serif;letter-spacing:-0.458px;">日志</span>
<span class="t" id="t64" style="left:8.6px;top:672.2px;font-size:11.3px;color:#000;font-family:'Liberation Sans', 'Noto Sans CJK SC', sans-serif;letter-spacing:-0.261px;">寻求帮助,请按F1键</span>
<span class="t" id="t65" style="left:554.5px;top:672.2px;font-size:11px;color:#1a1a1a;font-family:'Liberation Sans', 'Noto Sans CJK SC', sans-serif;letter-spacing:0.420px;">British Pound</span>
<span class="t" id="t66" style="left:689.3px;top:672.2px;font-size:11px;color:#1a1a1a;font-family:'Liberation Sans', 'Noto Sans CJK SC', sans-serif;letter-spacing:0.172px;">00/00/0000 00:00</span>
<span class="t" id="t67" style="left:806.6px;top:672.2px;font-size:11px;color:#1a1a1a;font-family:'Liberation Sans', 'Noto Sans CJK SC', sans-serif;letter-spacing:-0.074px;">O: 000.000</span>
<span class="t" id="t68" style="left:888.2px;top:672.2px;font-size:11px;color:#1a1a1a;font-family:'Liberation Sans', 'Noto Sans CJK SC', sans-serif;letter-spacing:0.077px;">H: 000.000</span>
<span class="t" id="t69" style="left:969.0px;top:672.2px;font-size:11px;color:#1a1a1a;font-family:'Liberation Sans', 'Noto Sans CJK SC', sans-serif;letter-spacing:-0.060px;">L: 000.000</span>
<span class="t" id="t70" style="left:1047.2px;top:672.2px;font-size:11px;color:#1a1a1a;font-family:'Liberation Sans', 'Noto Sans CJK SC', sans-serif;letter-spacing:-0.143px;">C: 000.000</span>
<span class="t" id="t71" style="left:1127.4px;top:672.2px;font-size:11px;color:#1a1a1a;font-family:'Liberation Sans', 'Noto Sans CJK SC', sans-serif;letter-spacing:-0.080px;">V: 00000</span>
<span class="t" id="t72" style="left:1265.0px;top:672.2px;font-size:11px;color:#1a1a1a;font-family:'Liberation Sans', 'Noto Sans CJK SC', sans-serif;letter-spacing:0.150px;">没有连接</span>
<div class="a" style="left:0;top:689px;width:1365px;height:6px;background:#b9d1ea"></div>
</body></html>
